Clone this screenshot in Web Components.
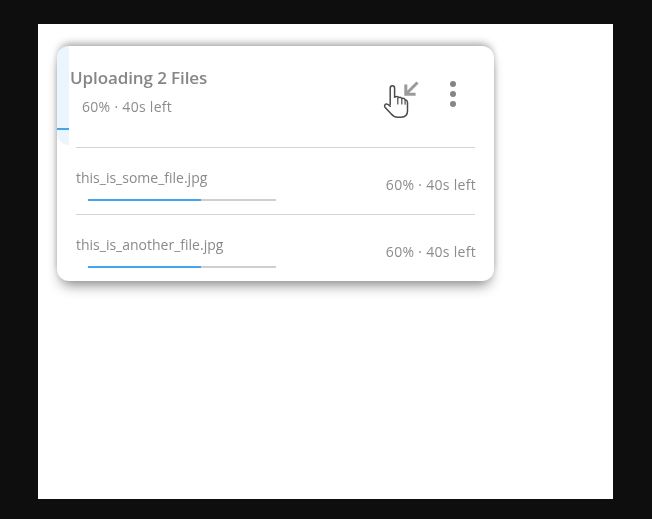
<!DOCTYPE html>
<html>
<head>
<meta charset="utf-8">
<title>Uploads</title>
<style>
  html, body { margin: 0; height: 100%; background: #0e0e0e; overflow: hidden; }
  body { font-family: "Open Sans", "Noto Sans", sans-serif; color: #888; }
</style>
</head>
<body>
<upload-stage>
  <upload-card>
    <upload-header slot="header" title-text="Uploading 2 Files" status="60% · 40s left"></upload-header>
    <upload-row name="this_is_some_file.jpg" status="60% · 40s left" percent="60"></upload-row>
    <upload-row name="this_is_another_file.jpg" status="60% · 40s left" percent="60"></upload-row>
  </upload-card>
</upload-stage>

<script>
// white sheet on the dark backdrop
class UploadStage extends HTMLElement {
  constructor() {
    super();
    this.attachShadow({ mode: "open" }).innerHTML = `
      <style>
        :host { display:block; box-sizing:border-box; width:575px; height:475px; margin:24px 0 0 38px;
                padding:22px 0 0 19px; background:#fff; }
      </style>
      <slot></slot>`;
  }
}

class UploadCard extends HTMLElement {
  constructor() {
    super();
    this.attachShadow({ mode: "open" }).innerHTML = `
      <style>
        :host { display:block; width:437px; height:235px; background:#fff; border-radius:12px; filter:blur(.3px);
                box-shadow:0 8px 13px -4px rgba(0,0,0,.46), 0 -5px 8px -3px rgba(0,0,0,.36), 0 0 8px rgba(0,0,0,.08); }
      </style>
      <slot name="header"></slot>
      <slot></slot>`;
  }
}

class UploadHeader extends HTMLElement {
  constructor() {
    super();
    this.attachShadow({ mode: "open" }).innerHTML = `
      <style>
        :host { display:flex; position:relative; height:102px; box-sizing:border-box; padding-bottom:2px; }
        .fill { flex:0 0 12px; height:99px; box-sizing:border-box; padding-top:82px; margin-right:1px;
                background:#eaf5fe; border-radius:12px 0 0 12px; }
        .fill i { display:block; height:2px; background:#45a4ec; }
        .text { flex:1 1 auto; padding-top:21px; }
        .title { font-size:17px; line-height:22px; font-weight:600; color:#868686; letter-spacing:-.1px; white-space:nowrap; }
        .status { margin:8px 0 0 12px; font-size:14px; line-height:20px; color:#8c8c8c; letter-spacing:.3px; white-space:nowrap; }
        .actions { display:flex; align-items:flex-start; gap:29px; padding:35px 37px 0 0; }
        .actions svg { display:block; }
        .rule { position:absolute; left:19px; right:19px; bottom:0; height:1px; background:#d4d4d4; }
        .hand { position:absolute; left:325px; top:38px; }
      </style>
      <div class="fill"><i></i></div>
      <div class="text">
        <div class="title"></div>
        <div class="status"></div>
      </div>
      <div class="actions">
        <svg width="18" height="18" viewBox="0 0 18 18" fill="none" stroke="#9a9a9a" stroke-width="3">
          <path d="M15.5 1.5 5 12"/><path d="M3.8 3.4V13.2H13.6"/>
        </svg>
        <svg width="8" height="28" viewBox="0 0 8 28" fill="#858585" style="margin-top:-1px">
          <circle cx="4" cy="4" r="3"/><circle cx="4" cy="14" r="3"/><circle cx="4" cy="24" r="3"/>
        </svg>
      </div>
      <div class="rule"></div>
      <svg class="hand" width="30" height="36" viewBox="0 0 30 36" fill="#fff" stroke="#4a4a4a" stroke-width="1.5" stroke-linejoin="round" stroke-linecap="round">
        <path d="M8.2 20.5V4.2C8.2 2.6 9.2 1.7 10.4 1.7S12.6 2.6 12.6 4.2V13.2L14 12.6C15.4 12.2 16.2 12.6 16.7 13.6 18 13 19.2 13.4 19.8 14.5 21.2 14 22.6 14.6 23.1 15.8 24.3 16 25.4 16.8 25.5 18.2V27C25.5 30.8 23 33.2 19 33.2H15.5C12.8 33.2 11 32.2 9.3 30L3.2 23.6C2.2 22.5 2.5 21 3.6 20.2 4.8 19.4 6 19.8 8.2 22.2"/>
        <path d="M15.8 14.2V20M19.8 14.8V20M23.1 16.2V20.2" stroke-width="1.2" fill="none"/>
      </svg>`;
    this.shadowRoot.querySelector(".title").textContent = this.getAttribute("title-text");
    this.shadowRoot.querySelector(".status").textContent = this.getAttribute("status");
  }
}

class UploadRow extends HTMLElement {
  constructor() {
    super();
    this.attachShadow({ mode: "open" }).innerHTML = `
      <style>
        :host { display:block; box-sizing:border-box; height:67px; padding:0 19px; }
        .inner { display:flex; justify-content:space-between; height:66px; box-sizing:border-box; }
        .name { font-size:14px; line-height:20px; margin-top:20px; color:#8a8a8a; white-space:nowrap; }
        .status { font-size:14px; line-height:20px; margin:27px -1px 0 0; color:#8c8c8c; letter-spacing:.3px; white-space:nowrap; }
        progress-line { margin:11px 0 0 12px; }
        .rule { height:1px; background:#d4d4d4; }
        :host(:last-child) .rule { display:none; }
      </style>
      <div class="inner">
        <div>
          <div class="name"></div>
          <progress-line></progress-line>
        </div>
        <div class="status"></div>
      </div>
      <div class="rule"></div>`;
    this.shadowRoot.querySelector(".name").textContent = this.getAttribute("name");
    this.shadowRoot.querySelector(".status").textContent = this.getAttribute("status");
    this.shadowRoot.querySelector("progress-line").setAttribute("percent", this.getAttribute("percent"));
  }
}

class ProgressLine extends HTMLElement {
  static get observedAttributes() { return ["percent"]; }
  constructor() {
    super();
    this.attachShadow({ mode: "open" }).innerHTML = `
      <style>
        :host { display:block; width:188px; height:2px; background:#cfcfcf; }
        i { display:block; height:100%; background:#45a4ec; }
      </style>
      <i></i>`;
  }
  attributeChangedCallback(_name, _old, value) {
    this.shadowRoot.querySelector("i").style.width = value + "%";
  }
}

customElements.define("progress-line", ProgressLine);
customElements.define("upload-stage", UploadStage);
customElements.define("upload-card", UploadCard);
customElements.define("upload-header", UploadHeader);
customElements.define("upload-row", UploadRow);
</script>
</body>
</html>
